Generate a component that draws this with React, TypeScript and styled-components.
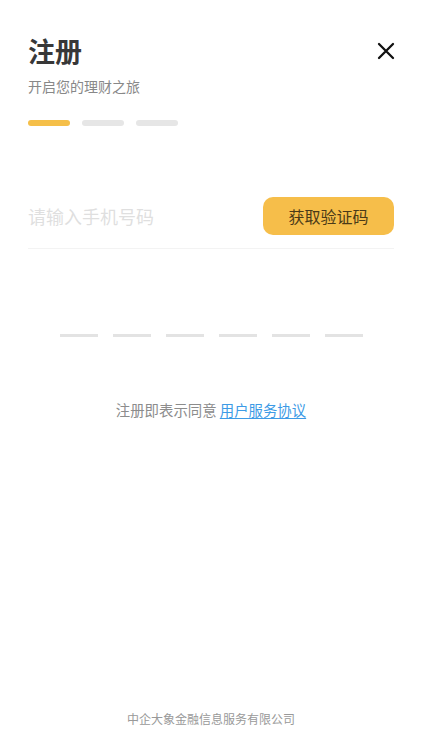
import React from "react";
import styled, { createGlobalStyle } from "styled-components";

const Global = createGlobalStyle`
  html, body { margin: 0; padding: 0; background: #fff; }
  body { font-family: "Noto Sans CJK SC", "Noto Sans", sans-serif; -webkit-font-smoothing: antialiased; }
  * { box-sizing: border-box; }
`;

const Page = styled.div`
  width: 422px;
  height: 750px;
  display: flex;
  flex-direction: column;
  padding: 0 28px;
  background: #fff;
`;

const Header = styled.div`
  display: flex;
  align-items: center;
  justify-content: space-between;
  padding-top: 32px;
`;

const Title = styled.h1`
  margin: 0;
  font-size: 27px;
  line-height: 38px;
  font-weight: 700;
  color: #383838;
`;

const CloseButton = styled.button`
  border: 0;
  background: none;
  padding: 0;
  margin-right: -1px;
  width: 18px;
  height: 18px;
  display: flex;
  cursor: pointer;
`;

const Subtitle = styled.p`
  margin: 6px 0 0;
  font-size: 14px;
  line-height: 20px;
  color: #888;
`;

const Steps = styled.div`
  display: flex;
  gap: 12px;
  margin-top: 24px;
`;

const Step = styled.div<{ $active?: boolean }>`
  width: 42px;
  height: 6px;
  border-radius: 3px;
  background: ${(p) => (p.$active ? "#f5bf49" : "#e6e6e6")};
`;

const PhoneRow = styled.div`
  display: flex;
  align-items: center;
  justify-content: space-between;
  margin-top: 71px;
  padding-bottom: 13px;
  border-bottom: 1px solid #f3f3f3;
`;

const PhoneInput = styled.input`
  flex: 1;
  min-width: 0;
  border: 0;
  outline: none;
  font-family: inherit;
  font-size: 18px;
  color: #333;
  padding: 0;
  background: transparent;
  &::placeholder { color: #dfdfdf; }
`;

const CodeButton = styled.button`
  width: 131px;
  height: 38px;
  border: 0;
  border-radius: 10px;
  background: #f6be4a;
  color: #4a3a18;
  font-family: inherit;
  font-size: 16px;
  padding: 0;
  cursor: pointer;
`;

const CodeSlots = styled.div`
  display: flex;
  justify-content: center;
  gap: 15px;
  margin-top: 85px;
`;

const Slot = styled.div`
  width: 38px;
  height: 3px;
  background: #e3e3e3;
`;

const Terms = styled.p`
  margin: 63px 0 0;
  text-align: center;
  font-size: 14.4px;
  line-height: 20px;
  color: #8c8c8c;
`;

const TermsLink = styled.a`
  color: #3d9be6;
  text-decoration: underline;
  text-underline-offset: 2px;
`;

const Footer = styled.footer`
  margin-top: auto;
  padding-bottom: 22px;
  text-align: center;
  font-size: 12px;
  line-height: 18px;
  color: #999;
`;

export default function App() {
  return (
    <>
      <Global />
      <Page>
        <Header>
          <Title>注册</Title>
          <CloseButton aria-label="关闭">
            <svg width="18" height="18" viewBox="0 0 18 18">
              <path d="M2 2 L16 16 M16 2 L2 16" stroke="#111" strokeWidth="2.3" strokeLinecap="round" />
            </svg>
          </CloseButton>
        </Header>
        <Subtitle>开启您的理财之旅</Subtitle>
        <Steps>
          <Step $active />
          <Step />
          <Step />
        </Steps>
        <PhoneRow>
          <PhoneInput placeholder="请输入手机号码" />
          <CodeButton>获取验证码</CodeButton>
        </PhoneRow>
        <CodeSlots>
          {Array.from({ length: 6 }).map((_, i) => (
            <Slot key={i} />
          ))}
        </CodeSlots>
        <Terms>
          注册即表示同意 <TermsLink href="#">用户服务协议</TermsLink>
        </Terms>
        <Footer>中企大象金融信息服务有限公司</Footer>
      </Page>
    </>
  );
}
